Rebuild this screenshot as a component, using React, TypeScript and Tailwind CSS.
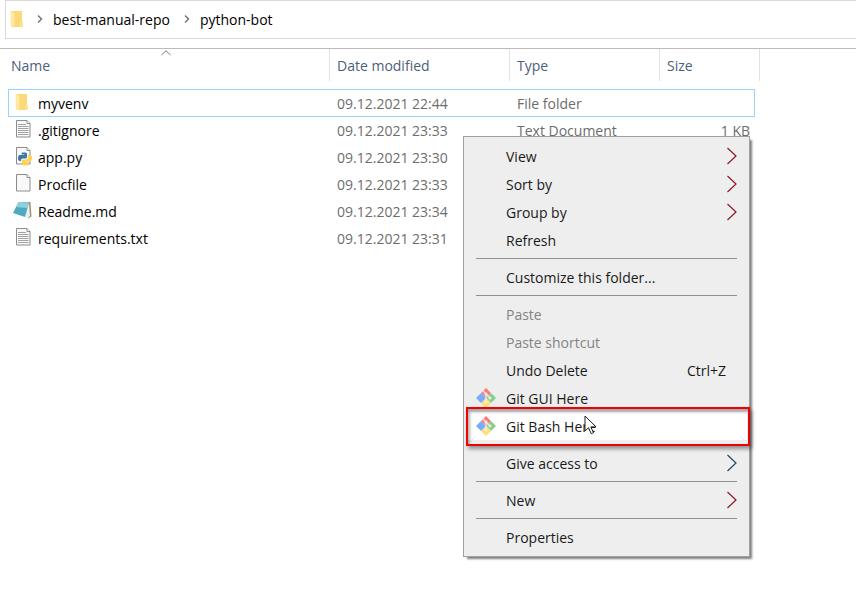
import React from "react";

type IconName = "folder" | "lines" | "python" | "blank" | "notebook";

const files: { name: string; icon: IconName; date: string; type: string; size: string }[] = [
  { name: "myvenv", icon: "folder", date: "09.12.2021 22:44", type: "File folder", size: "" },
  { name: ".gitignore", icon: "lines", date: "09.12.2021 23:33", type: "Text Document", size: "1 KB" },
  { name: "app.py", icon: "python", date: "09.12.2021 23:30", type: "", size: "" },
  { name: "Procfile", icon: "blank", date: "09.12.2021 23:33", type: "", size: "" },
  { name: "Readme.md", icon: "notebook", date: "09.12.2021 23:34", type: "", size: "" },
  { name: "requirements.txt", icon: "lines", date: "09.12.2021 23:31", type: "", size: "" },
];

function Folder() {
  return (
    <svg width="20" height="20" viewBox="0 0 20 20" aria-hidden="true">
      <path d="M5 1h10v12h1v4H5z" fill="#f9d978" />
      <path d="M13 12h3v5h-3z" fill="#fbe391" />
      <path d="M4 1l3.500 2v14.500L4 16z" fill="#ffeaa8" stroke="#f8dc8a" strokeWidth=".5" />
    </svg>
  );
}

function Sheet({ children }: { children?: React.ReactNode }) {
  return (
    <svg width="20" height="20" viewBox="0 0 20 20" aria-hidden="true">
      <path d="M4.500 .5h10.500l3 3v13.500h-13.500z" fill="#f9f9f9" stroke="#8c8c8c" />
      <path d="M15 .5v3h3" fill="#fff" stroke="#8c8c8c" />
      {children}
    </svg>
  );
}

function FileIcon({ name }: { name: IconName }) {
  if (name === "folder") return <Folder />;
  if (name === "blank") return <Sheet />;
  if (name === "lines")
    return (
      <Sheet>
        <path d="M6 4.500h8M6 6.500h10.500M6 8.500h10.500M6 10.500h10.500M6 12.500h10.500M6 14.500h10.500" stroke="#a2a2a2" />
      </Sheet>
    );
  if (name === "python")
    return (
      <Sheet>
        <path d="M10.500 5.500h3q1.500 0 1.500 1.500v3q0 1.500-1.500 1.500h-3Q9 11.500 9 13.500v.5H8q-2 0-2-3t2-3h4.500v-.5H9.500v-.5q0-1.500 1-1.500z" fill="#3b76ab" />
        <path d="M16 8h1.500q2.500 0 2.500 3t-2.500 3.500H13v.5h3.500v1.500q0 2-3.250 2T10 16.500V14q0-1.500 1.500-1.500h3Q16 12.500 16 11z" fill="#ffd343" />
      </Sheet>
    );
  return (
    <svg width="20" height="20" viewBox="0 0 20 20" aria-hidden="true">
      <path d="M7 1l11.500 0 1 14.500-3.500 2z" fill="#a09070" />
      <path d="M17 1.500l1 13.500-2.500 2.500-3-2z" fill="#e9eef0" />
      <path d="M6.500 1L17 1.500 13 16 1 12z" fill="#4fa9c0" />
      <path d="M6.500 1L17 1.500 15.500 7 4 6z" fill="#8fd0dc" />
    </svg>
  );
}

function GitIcon() {
  return (
    <svg width="20" height="20" viewBox="0 0 20 20" aria-hidden="true">
      <path d="M10 0l5 5-5 5-5-5z" fill="#ff7b7b" />
      <path d="M15 5l5 5-5 5-5-5z" fill="#86cf8a" />
      <path d="M10 10l5 5-5 5-5-5z" fill="#ffe070" />
      <path d="M5 5l5 5-5 5-5-5z" fill="#78adff" />
      <path d="M7 3l3 3v8M10 6l4 4" stroke="#eee" strokeWidth="1.200" fill="none" />
      <circle cx="10" cy="6" r="1.500" fill="#eee" />
      <circle cx="10" cy="14" r="1.500" fill="#eee" />
      <circle cx="14" cy="10" r="1.500" fill="#eee" />
    </svg>
  );
}

function Crumb() {
  return (
    <svg width="6" height="8" viewBox="0 0 6 8" aria-hidden="true" className="mb-[2px]">
      <path d="M1 .5L4.500 4 1 7.500" fill="none" stroke="#777" strokeWidth="1.500" />
    </svg>
  );
}

function Arrow({ color }: { color: string }) {
  return (
    <svg width="10" height="18" viewBox="0 0 10 18" aria-hidden="true" className="shrink-0">
      <path d="M.5 1L9 9 .5 17" fill="none" stroke={color} strokeWidth="1.200" />
    </svg>
  );
}

type ItemProps = { label: string; arrow?: string; shortcut?: string; git?: boolean; disabled?: boolean; active?: boolean };

function Item({ label, arrow, shortcut, git, disabled, active }: ItemProps) {
  return (
    <li role="none" className="relative px-[2px]">
      <button
        type="button"
        role="menuitem"
        disabled={disabled}
        className={`flex h-7 w-full items-center px-[10px] text-left ${active ? "bg-white" : ""} ${disabled ? "text-[#848484]" : "text-[#1a1a1a]"}`}
      >
        <span className="mr-[10px] w-5 shrink-0">{git && <GitIcon />}</span>
        <span className="flex-1 pt-[2px]">{label}</span>
        {shortcut && <span className="pt-[2px] pr-[11px]">{shortcut}</span>}
        {arrow && <Arrow color={arrow} />}
      </button>
      {active && (
        <span className="pointer-events-none absolute -top-[5px] -right-px -bottom-[6px] left-[2px] border-2 border-[#f00000] shadow-[2px_3px_4px_rgba(0,0,0,0.4),inset_2px_3px_3px_rgba(0,0,0,0.3)]" />
      )}
      {active && (
        <svg width="13" height="20" viewBox="0 0 13 20" aria-hidden="true" className="pointer-events-none absolute top-[3px] left-[120px]">
          <path d="M1 1v15l3.500-3.300 2.700 6 2.300-1-2.700-5.800H12z" fill="#fff" stroke="#222" />
        </svg>
      )}
    </li>
  );
}

function Separator() {
  return (
    <li role="separator" className="px-3 py-1">
      <div className="h-px bg-[#919191]" />
    </li>
  );
}

export default function App() {
  const th = "h-8 border-r border-[#e2e2e2] pt-px text-left font-normal text-[#4c607a]";
  return (
    <main className="relative min-h-screen overflow-hidden bg-white font-['Open_Sans','Noto_Sans',sans-serif] text-[14px] leading-5 text-black">
      <nav aria-label="Path" className="ml-[5px] flex h-[39px] items-center border border-r-0 border-[#d9d9d9] pl-px">
        <Folder />
        <span className="ml-[10px]"><Crumb /></span>
        <a href="#repo" className="ml-[10px]">best-manual-repo</a>
        <span className="ml-[14px]"><Crumb /></span>
        <a href="#bot" className="ml-[10px]">python-bot</a>
      </nav>
      <section className="relative mt-[9px] border-t border-[#bbb] pl-2">
        <svg width="10" height="6" viewBox="0 0 10 6" aria-hidden="true" className="absolute top-px left-[161px]">
          <path d="M.5 5L5 .700 9.500 5" fill="none" stroke="#777" />
        </svg>
        <table className="w-[752px] table-fixed border-separate border-spacing-0">
          <colgroup>
            <col className="w-[322px]" />
            <col className="w-[180px]" />
            <col className="w-[150px]" />
            <col className="w-[95px]" />
            <col className="w-[5px]" />
          </colgroup>
          <thead>
            <tr>
              <th scope="col" className={`${th} pl-[3px]`}>Name</th>
              <th scope="col" className={`${th} pl-[7px]`}>Date modified</th>
              <th scope="col" className={`${th} pl-[7px]`}>Type</th>
              <th scope="col" colSpan={2} className={`${th} pl-[7px]`}>Size</th>
            </tr>
            <tr aria-hidden="true"><td colSpan={5} className="h-2" /></tr>
          </thead>
          <tbody>
            {files.map((f, i) => {
              const cell = i === 0 ? "h-7 border-y border-[#99d1ff] pt-[2px]" : "h-[27px]";
              return (
                <tr key={f.name}>
                  <td className={`${cell} ${i === 0 ? "border-l pl-[3px]" : "pl-1"}`}>
                    <span className="flex items-center gap-[6px]">
                      <span className="mb-[2px]"><FileIcon name={f.icon} /></span>
                      {f.name}
                    </span>
                  </td>
                  <td className={`${cell} pl-[7px] text-[#6d6d6d]`}>{f.date}</td>
                  <td className={`${cell} pl-[7px] text-[#6d6d6d]`}>{f.type}</td>
                  <td className={`${cell} pr-[5px] text-right text-[#6d6d6d] ${i === 0 ? "border-r" : ""}`}>{f.size}</td>
                  <td />
                </tr>
              );
            })}
          </tbody>
        </table>
      </section>
      <ul
        role="menu"
        className="absolute top-[136px] left-[463px] w-[287px] border border-[#a0a0a0] bg-[#eeeeee] py-[5px] shadow-[3px_3px_2px_-1px_rgba(0,0,0,0.5)]"
      >
        <Item label="View" arrow="#8b1a2b" />
        <Item label="Sort by" arrow="#8b1a2b" />
        <Item label="Group by" arrow="#8b1a2b" />
        <Item label="Refresh" />
        <Separator />
        <Item label="Customize this folder..." />
        <Separator />
        <Item label="Paste" disabled />
        <Item label="Paste shortcut" disabled />
        <Item label="Undo Delete" shortcut="Ctrl+Z" />
        <Item label="Git GUI Here" git />
        <Item label="Git Bash Here" git active />
        <Separator />
        <Item label="Give access to" arrow="#1a4a6b" />
        <Separator />
        <Item label="New" arrow="#8b1a2b" />
        <Separator />
        <Item label="Properties" />
      </ul>
    </main>
  );
}
